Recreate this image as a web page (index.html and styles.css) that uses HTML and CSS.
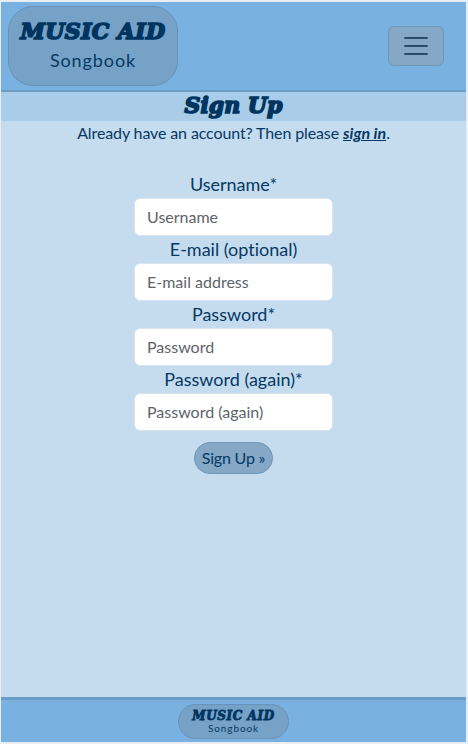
FILE: index.html
```html
<!DOCTYPE html>
<html lang="en">
<head>
<meta charset="utf-8">
<title>Music Aid Songbook</title>
<link rel="stylesheet" href="styles.css">
</head>
<body>
<div class="page">
  <header class="header">
    <a class="brand"><span class="brand-name display">MUSIC AID</span><span class="brand-sub">Songbook</span></a>
    <button class="toggler" aria-label="Menu">
      <svg width="30" height="30" viewBox="0 0 30 30"><path d="M4 7h22M4 15h22M4 23h22" stroke="#2c4a69" stroke-width="2" stroke-linecap="round"/></svg>
    </button>
  </header>
  <h1 class="title"><span class="display title-text">Sign Up</span></h1>
  <main class="main">
    <p class="intro">Already have an account? Then please <a class="link">sign in</a>.</p>
    <form class="form">
      <label class="label" for="u">Username*</label>
      <input class="input" id="u" placeholder="Username">
      <label class="label" for="e">E-mail (optional)</label>
      <input class="input" id="e" placeholder="E-mail address">
      <label class="label" for="p">Password*</label>
      <input class="input" id="p" type="password" placeholder="Password">
      <label class="label" for="q">Password (again)*</label>
      <input class="input" id="q" type="password" placeholder="Password (again)">
      <button class="submit" type="button">Sign Up »</button>
    </form>
  </main>
  <footer class="footer">
    <a class="brand brand-small"><span class="brand-name display">MUSIC AID</span><span class="brand-sub">Songbook</span></a>
  </footer>
</div>
</body>
</html>
```
FILE: styles.css
```css
* { box-sizing: border-box; }
body {
  margin: 0;
  height: 744px;
  padding: 2px 2px 2px 1px;
  background: #eaeef2;
  font-family: Lato, sans-serif;
  font-size: 16px;
  font-variant-ligatures: none;
  color: #053963;
}
.page { height: 740px; display: flex; flex-direction: column; background: #c5dbee; }
.header {
  height: 90px;
  flex: none;
  display: flex;
  justify-content: space-between;
  align-items: flex-start;
  padding: 4px 22px 0 7px;
  background: #79b2e0;
  border-bottom: 2px solid #6b9dc6;
}
.display {
  font-family: "DejaVu Serif", serif;
  font-weight: 700;
  font-style: italic;
  color: #003560;
  -webkit-text-stroke: 1.7px #003560;
  white-space: nowrap;
}
.brand {
  width: 170px;
  height: 80px;
  display: flex;
  flex-direction: column;
  align-items: center;
  background: #76a2c8;
  border: 1px solid #6793ba;
  border-radius: 25px;
}
.brand-name { font-size: 22px; line-height: 28px; margin-top: 10px; letter-spacing: 0.4px; }
.brand-sub { font-size: 18px; line-height: 26px; margin-top: 2px; letter-spacing: 0.9px; }
.toggler {
  width: 56px;
  height: 40px;
  margin-top: 20px;
  padding: 0;
  display: flex;
  align-items: center;
  justify-content: center;
  background: #85a8c6;
  border: 1px solid #7096b8;
  border-radius: 6px;
}
.title {
  height: 29px;
  flex: none;
  margin: 0;
  background: #a9cde8;
  text-align: center;
  font-size: 22px;
  line-height: 25px;
}
.title-text { letter-spacing: 0; }
.main { flex: 1; }
.intro { margin: 0; text-align: center; line-height: 24px; letter-spacing: -0.12px; }
.link { font-weight: 700; font-style: italic; text-decoration: underline; letter-spacing: 0; }
.form { width: 199px; margin: 26px auto 0; display: flex; flex-direction: column; align-items: center; }
.label { font-size: 18px; line-height: 27px; white-space: nowrap; }
.input {
  width: 199px;
  height: 38px;
  padding: 5px 12px 7px;
  border: 1px solid #d9e4ee;
  border-radius: 6px;
  background: #fff;
  font: 16px/24px Lato, sans-serif;
}
.input::placeholder { color: #5e6369; opacity: 1; }
.submit {
  width: 79px;
  height: 32px;
  margin-top: 11px;
  padding: 0;
  border: 1px solid #7096b8;
  border-radius: 16px;
  background: #85a8c6;
  color: #053963;
  font: 16px/24px Lato, sans-serif;
  letter-spacing: -0.2px;
}
.footer {
  height: 45px;
  flex: none;
  display: flex;
  justify-content: center;
  padding-top: 4px;
  background: #79b2e0;
  border-top: 3px solid #6b9dc6;
}
.brand-small { width: 111px; height: 35px; border-radius: 18px; }
.brand-small .brand-name { font-size: 12px; line-height: 14px; margin-top: 4px; letter-spacing: 0.6px; -webkit-text-stroke-width: 0.8px; }
.brand-small .brand-sub { font-size: 10px; line-height: 12px; margin-top: -1px; }
```
